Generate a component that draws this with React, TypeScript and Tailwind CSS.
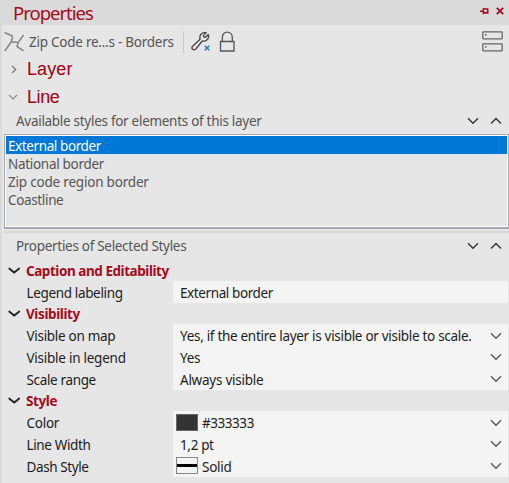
import type { ReactNode } from "react";

const Down = ({ color = "#333333", w = 1.3 }: { color?: string; w?: number }) => (
  <svg width="12" height="8" viewBox="0 0 12 8" fill="none" stroke={color} strokeWidth={w}>
    <path d="M1 1.3 6 6.3 11 1.3" />
  </svg>
);

const Up = () => (
  <svg width="12" height="8" viewBox="0 0 12 8" fill="none" stroke="#333333" strokeWidth="1.4">
    <path d="M1 6.5 6 1.5 11 6.5" />
  </svg>
);

function PanelHeader({ title, spacing }: { title: string; spacing: string }) {
  return (
    <div className="flex h-[25px] items-center pl-[13px] pr-[7px] text-[#555555]">
      <span className={spacing}>{title}</span>
      <div className="ml-auto flex gap-[11px]">
        <Down w={1.4} />
        <Up />
      </div>
    </div>
  );
}

function Group({ title, spacing }: { title: string; spacing: string }) {
  return (
    <div className="flex h-[21.75px] items-center pl-[5px] font-bold text-[#a50b20]">
      <svg className="mt-[2px]" width="13" height="8" viewBox="0 0 13 8" fill="none" stroke="#222222" strokeWidth="1.9">
        <path d="M.8 1 2.4 2.6 6.2 5.6 10 2.6 11.6 1" />
      </svg>
      <span className={"ml-[5px] pt-[2px] " + spacing}>{title}</span>
    </div>
  );
}

function Row({ label, spacing, children, select = true }: { label: string; spacing: string; children: ReactNode; select?: boolean }) {
  return (
    <div className="flex h-[21.75px] pl-[23.5px] pr-px text-[#1c1c1c]">
      <div className={"flex w-[146.5px] shrink-0 items-center pt-[2px] " + spacing}>{label}</div>
      <div className="flex flex-1 items-center bg-[#f4f4f4]">
        {children}
        {select && (
          <span className="ml-auto mr-[6px] flex pt-px">
            <Down color="#555555" />
          </span>
        )}
      </div>
    </div>
  );
}

export default function App() {
  return (
    <div className="flex h-[483px] w-[509px] flex-col overflow-hidden whitespace-nowrap bg-[#dadada] font-['Noto_Sans',sans-serif] text-[13.5px] leading-[18px]">
      <header className="flex h-[25px] shrink-0 items-center pl-[13px] pr-[5px] text-[#a50b20]">
        <span className="text-[18.5px] leading-[24px] tracking-[-1px]">Properties</span>
        <svg className="ml-auto mt-[-4px]" width="9" height="8" viewBox="0 0 9 8" fill="none" stroke="#a50b20" strokeWidth="1.4">
          <path d="M0 4.2H3M3.3 1V7.2M3 2H8M7.8 1.5V6.5" />
          <path d="M3 5.7H8.3" strokeWidth="1.9" />
        </svg>
        <svg className="ml-[7px] mt-[-4px]" width="8" height="8" viewBox="0 0 8 8" stroke="#a50b20" strokeWidth="1.8">
          <path d="M.8.8 7.2 7.2M7.2.8.8 7.2" />
        </svg>
      </header>

      <main className="ml-[2px] flex flex-1 flex-col bg-[#e6e6e6] pl-px">
        <div className="flex h-[33px] shrink-0 items-center pl-px pr-[6px] text-[#555555]">
          <svg width="21" height="22" viewBox="0 0 21 22" fill="none" stroke="#858585" strokeWidth="1.5">
            <path d="M.5 1.5 8 4.8 8.5 6.5 7.3 10.8.8 20M7.3 10.8 14.3 11.5 19.5 4M14.3 11.5 13 15.5 19.5 19.8" />
          </svg>
          <span className="ml-[4px] tracking-[-0.25px]">Zip Code re...s - Borders</span>
          <div className="ml-[9.5px] flex items-center">
            <i className="h-[22px] w-px bg-[#c8c8c8]" />
            <svg className="ml-[7px]" width="20" height="21" viewBox="0 0 20 21" fill="none" stroke="#454545" strokeWidth="1.3">
              <path d="M1.4 15.5 9.1 8.2C8.1 4.6 10.3 1.4 14 1.3L15.1 1.8 12.4 4.4 12.8 6 14.5 6.3 17.1 3.7 17.7 4.9C17.8 8.4 14.8 10.7 11.3 10L4.6 18.2C2.5 19.8-.2 17.7 1.4 15.5Z" />
              <path d="m13.8 14.8 4.5 4.5m0-4.5-4.5 4.5" stroke="#217fad" strokeWidth="1.5" />
            </svg>
            <svg className="ml-[8px]" width="17" height="21" viewBox="0 0 17 21" fill="none" stroke="#555555" strokeWidth="1.3">
              <path d="M1.5 10.5H15V20H1.5ZM3.3 10.5V6.5C3.3-.6 13.3-.6 13.3 6.5V10.5" />
            </svg>
          </div>
          <svg className="ml-auto" width="21" height="21" viewBox="0 0 21 21" fill="none" stroke="#666666" strokeWidth="1.3">
            <rect x=".8" y=".8" width="19.4" height="7" rx=".5" />
            <rect x=".8" y="12.8" width="19.4" height="7" rx=".5" />
            <path d="M3 4h1.6M3 16h1.6" strokeWidth="1.5" />
          </svg>
        </div>

        <div className="font-['Liberation_Sans',sans-serif] text-[18px] leading-[28px] text-[#a00014]">
          <div className="flex h-[22px] items-center pl-[8px]">
            <svg width="6" height="9" viewBox="0 0 6 9" fill="none" stroke="#777777" strokeWidth="1.2">
              <path d="M1 1 4.8 4.5 1 8" />
            </svg>
            <span className="ml-[10px] tracking-[0.1px]">Layer</span>
          </div>
          <div className="mt-[3px] flex h-[28px] items-center pl-[5px]">
            <svg width="10" height="6" viewBox="0 0 10 6" fill="none" stroke="#888888" strokeWidth="1.2">
              <path d="M1 1 5 5 9 1" />
            </svg>
            <span className="ml-[9px] tracking-[-0.4px]">Line</span>
          </div>
        </div>

        <div className="mt-[-3px] h-[26px] shrink-0">
          <PanelHeader title="Available styles for elements of this layer" spacing="tracking-[-0.29px]" />
        </div>

        <div className="ml-px h-[95px] shrink-0 border border-b-2 border-[#a5a9b0] text-[#555555]">
          <div className="h-full border border-white">
            <div className="h-[18px] bg-[#0078d7] pl-[2px] pt-px tracking-[-0.4px] text-white">External border</div>
            <div className="pl-[2px] pt-px tracking-[-0.3px]">National border</div>
            <div className="pl-[2px] tracking-[-0.2px]">Zip code region border</div>
            <div className="pl-[2px] tracking-[-0.35px]">Coastline</div>
          </div>
        </div>

        <div className="ml-px mt-[2px] h-[2px] shrink-0 bg-[#d8d8d8]" />
        <div className="h-[26px] shrink-0">
          <PanelHeader title="Properties of Selected Styles" spacing="pt-px tracking-[-0.3px]" />
        </div>

        <Group title="Caption and Editability" spacing="tracking-[-0.45px]" />
        <Row label="Legend labeling" spacing="tracking-[-0.35px]" select={false}>
          <span className="pl-[7px] pt-[2px] tracking-[-0.4px]">External border</span>
        </Row>
        <Group title="Visibility" spacing="tracking-[-0.4px]" />
        <Row label="Visible on map" spacing="tracking-[-0.3px]">
          <span className="pl-[7px] pt-[2px] tracking-[-0.3px]">Yes, if the entire layer is visible or visible to scale.</span>
        </Row>
        <Row label="Visible in legend" spacing="tracking-[-0.25px]">
          <span className="pl-[7px] pt-[2px] tracking-[-0.25px]">Yes</span>
        </Row>
        <Row label="Scale range" spacing="tracking-[-0.35px]">
          <span className="pl-[7px] pt-[2px] tracking-[-0.25px]">Always visible</span>
        </Row>
        <Group title="Style" spacing="tracking-[-0.4px]" />
        <Row label="Color" spacing="tracking-[-0.25px]">
          <i className="ml-[3px] h-[17px] w-[22px] border border-[#666666] bg-[#333333]" />
          <span className="pl-[4px] pt-[2px] tracking-[-0.45px]">#333333</span>
        </Row>
        <Row label="Line Width" spacing="tracking-[-0.35px]">
          <span className="pl-[7px] pt-[2px] tracking-[-0.35px]">1,2 pt</span>
        </Row>
        <Row label="Dash Style" spacing="tracking-[-0.4px]">
          <i className="ml-[3px] flex h-[17px] w-[22px] items-center border border-[#888888]">
            <b className="h-[3px] w-full bg-black" />
          </i>
          <span className="pl-[4px] pt-[2px] tracking-[-0.25px]">Solid</span>
        </Row>
      </main>
    </div>
  );
}
